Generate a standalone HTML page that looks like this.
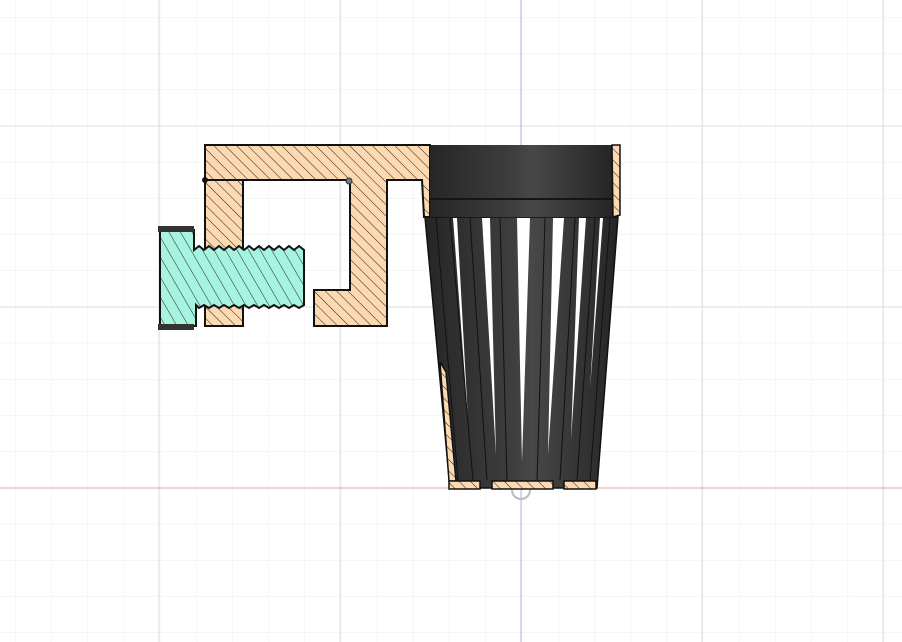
<!DOCTYPE html>
<html><head><style>html,body{margin:0;padding:0;background:#fff;width:902px;height:642px;overflow:hidden}</style></head>
<body>
<svg width="902" height="642" viewBox="0 0 902 642" xmlns="http://www.w3.org/2000/svg">
<defs>
<pattern id="grid" x="-21.2" y="17" width="36.2" height="36.2" patternUnits="userSpaceOnUse">
<path d="M0 0H36.2M0 0V36.2" stroke="#ececec" stroke-width="1" fill="none"/>
</pattern>
<pattern id="hO" width="8" height="8" patternUnits="userSpaceOnUse" patternTransform="rotate(-45)">
<rect width="8" height="8" fill="#fcd9b0"/><line x1="0" y1="0" x2="0" y2="8" stroke="#222" stroke-width="1"/>
</pattern>
<pattern id="hG" width="10" height="10" patternUnits="userSpaceOnUse" patternTransform="rotate(-30)">
<rect width="10" height="10" fill="#a6f3e0"/><line x1="0" y1="0" x2="0" y2="10" stroke="#222" stroke-width="1"/>
</pattern>
<linearGradient id="cup" x1="0" x2="1">
<stop offset="0" stop-color="#262626"/><stop offset="0.45" stop-color="#3e3e3e"/><stop offset="0.55" stop-color="#484848"/><stop offset="1" stop-color="#252525"/>
</linearGradient>
</defs>
<rect width="902" height="642" fill="url(#grid)"/>
<line x1="0" y1="126" x2="902" y2="126" stroke="#dedede"/>
<line x1="0" y1="307" x2="902" y2="307" stroke="#dedede"/>
<line x1="159" y1="0" x2="159" y2="642" stroke="#dedede"/>
<line x1="340" y1="0" x2="340" y2="642" stroke="#dedede"/>
<line x1="702" y1="0" x2="702" y2="642" stroke="#dedede"/>
<line x1="883" y1="0" x2="883" y2="642" stroke="#dedede"/>
<line x1="0" y1="488" x2="902" y2="488" stroke="#f0a0a0"/>
<line x1="521" y1="0" x2="521" y2="642" stroke="#b0b0e8"/>

<path d="M205 145H430V217L424 217L422 180H387V326H314V290H350V180H243V326H205Z" fill="url(#hO)" stroke="#111" stroke-width="2"/>
<line x1="205" y1="180" x2="350" y2="180" stroke="#111" stroke-width="2"/>
<circle cx="205" cy="180" r="3" fill="#111"/>
<circle cx="349" cy="181" r="3" fill="#777" stroke="#333"/>

<path d="M160 230H194V250 l5 -4 5 4 5 -4 5 4 5 -4 5 4 5 -4 5 4 5 -4 5 4 5 -4 5 4 5 -4 5 4 5 -4 5 4 5 -4 5 4 5 -4 5 4 5 -4 5 4 V305 l-5 3 -5 -3 -5 3 -5 -3 -5 3 -5 -3 -5 3 -5 -3 -5 3 -5 -3 -5 3 -5 -3 -5 3 -5 -3 -5 3 -5 -3 -5 3 -5 -3 -5 3 -5 -3 -5 3 -3 -3 V326H160Z" fill="url(#hG)" stroke="#111" stroke-width="2"/>
<rect x="158" y="226" width="36" height="6" fill="#333"/>
<rect x="158" y="324" width="36" height="6" fill="#333"/>

<path d="M425 217H618L597 488H450Z" fill="url(#cup)" stroke="#111" stroke-width="1.5"/>
<rect x="430" y="145" width="183" height="72" fill="url(#cup)"/>
<line x1="430" y1="199" x2="613" y2="199" stroke="#151515" stroke-width="2"/>
<g fill="#fff">
<path d="M453 218H457L468 420Z"/>
<path d="M482 218H490L496 455Z"/>
<path d="M517 218H530L522 462Z"/>
<path d="M553 218H564L548 455Z"/>
<path d="M579 218H586L571 440Z"/>
<path d="M600 218H603L590 390Z"/>
</g>
<g stroke="#111" stroke-width="1">
<line x1="436" y1="218" x2="458" y2="480"/>
<line x1="450" y1="218" x2="473" y2="480"/>
<line x1="470" y1="218" x2="487" y2="480"/>
<line x1="500" y1="218" x2="507" y2="480"/>
<line x1="545" y1="218" x2="537" y2="480"/>
<line x1="575" y1="218" x2="560" y2="480"/>
<line x1="595" y1="218" x2="577" y2="480"/>
<line x1="610" y1="218" x2="590" y2="480"/>
</g>
<path d="M612 145H620V215L613 217Z" fill="url(#hO)" stroke="#111" stroke-width="1.5"/>
<path d="M440 362L446 372L456 481H449Z" fill="url(#hO)" stroke="#111" stroke-width="1.5"/>
<rect x="449" y="481" width="31" height="8" fill="url(#hO)" stroke="#111" stroke-width="1.5"/>
<rect x="492" y="481" width="61" height="8" fill="url(#hO)" stroke="#111" stroke-width="1.5"/>
<rect x="564" y="481" width="32" height="8" fill="url(#hO)" stroke="#111" stroke-width="1.5"/>
<path d="M512 490a9 9 0 0 0 18 0" fill="none" stroke="#bbb" stroke-width="2"/>
</svg>
</body></html>
